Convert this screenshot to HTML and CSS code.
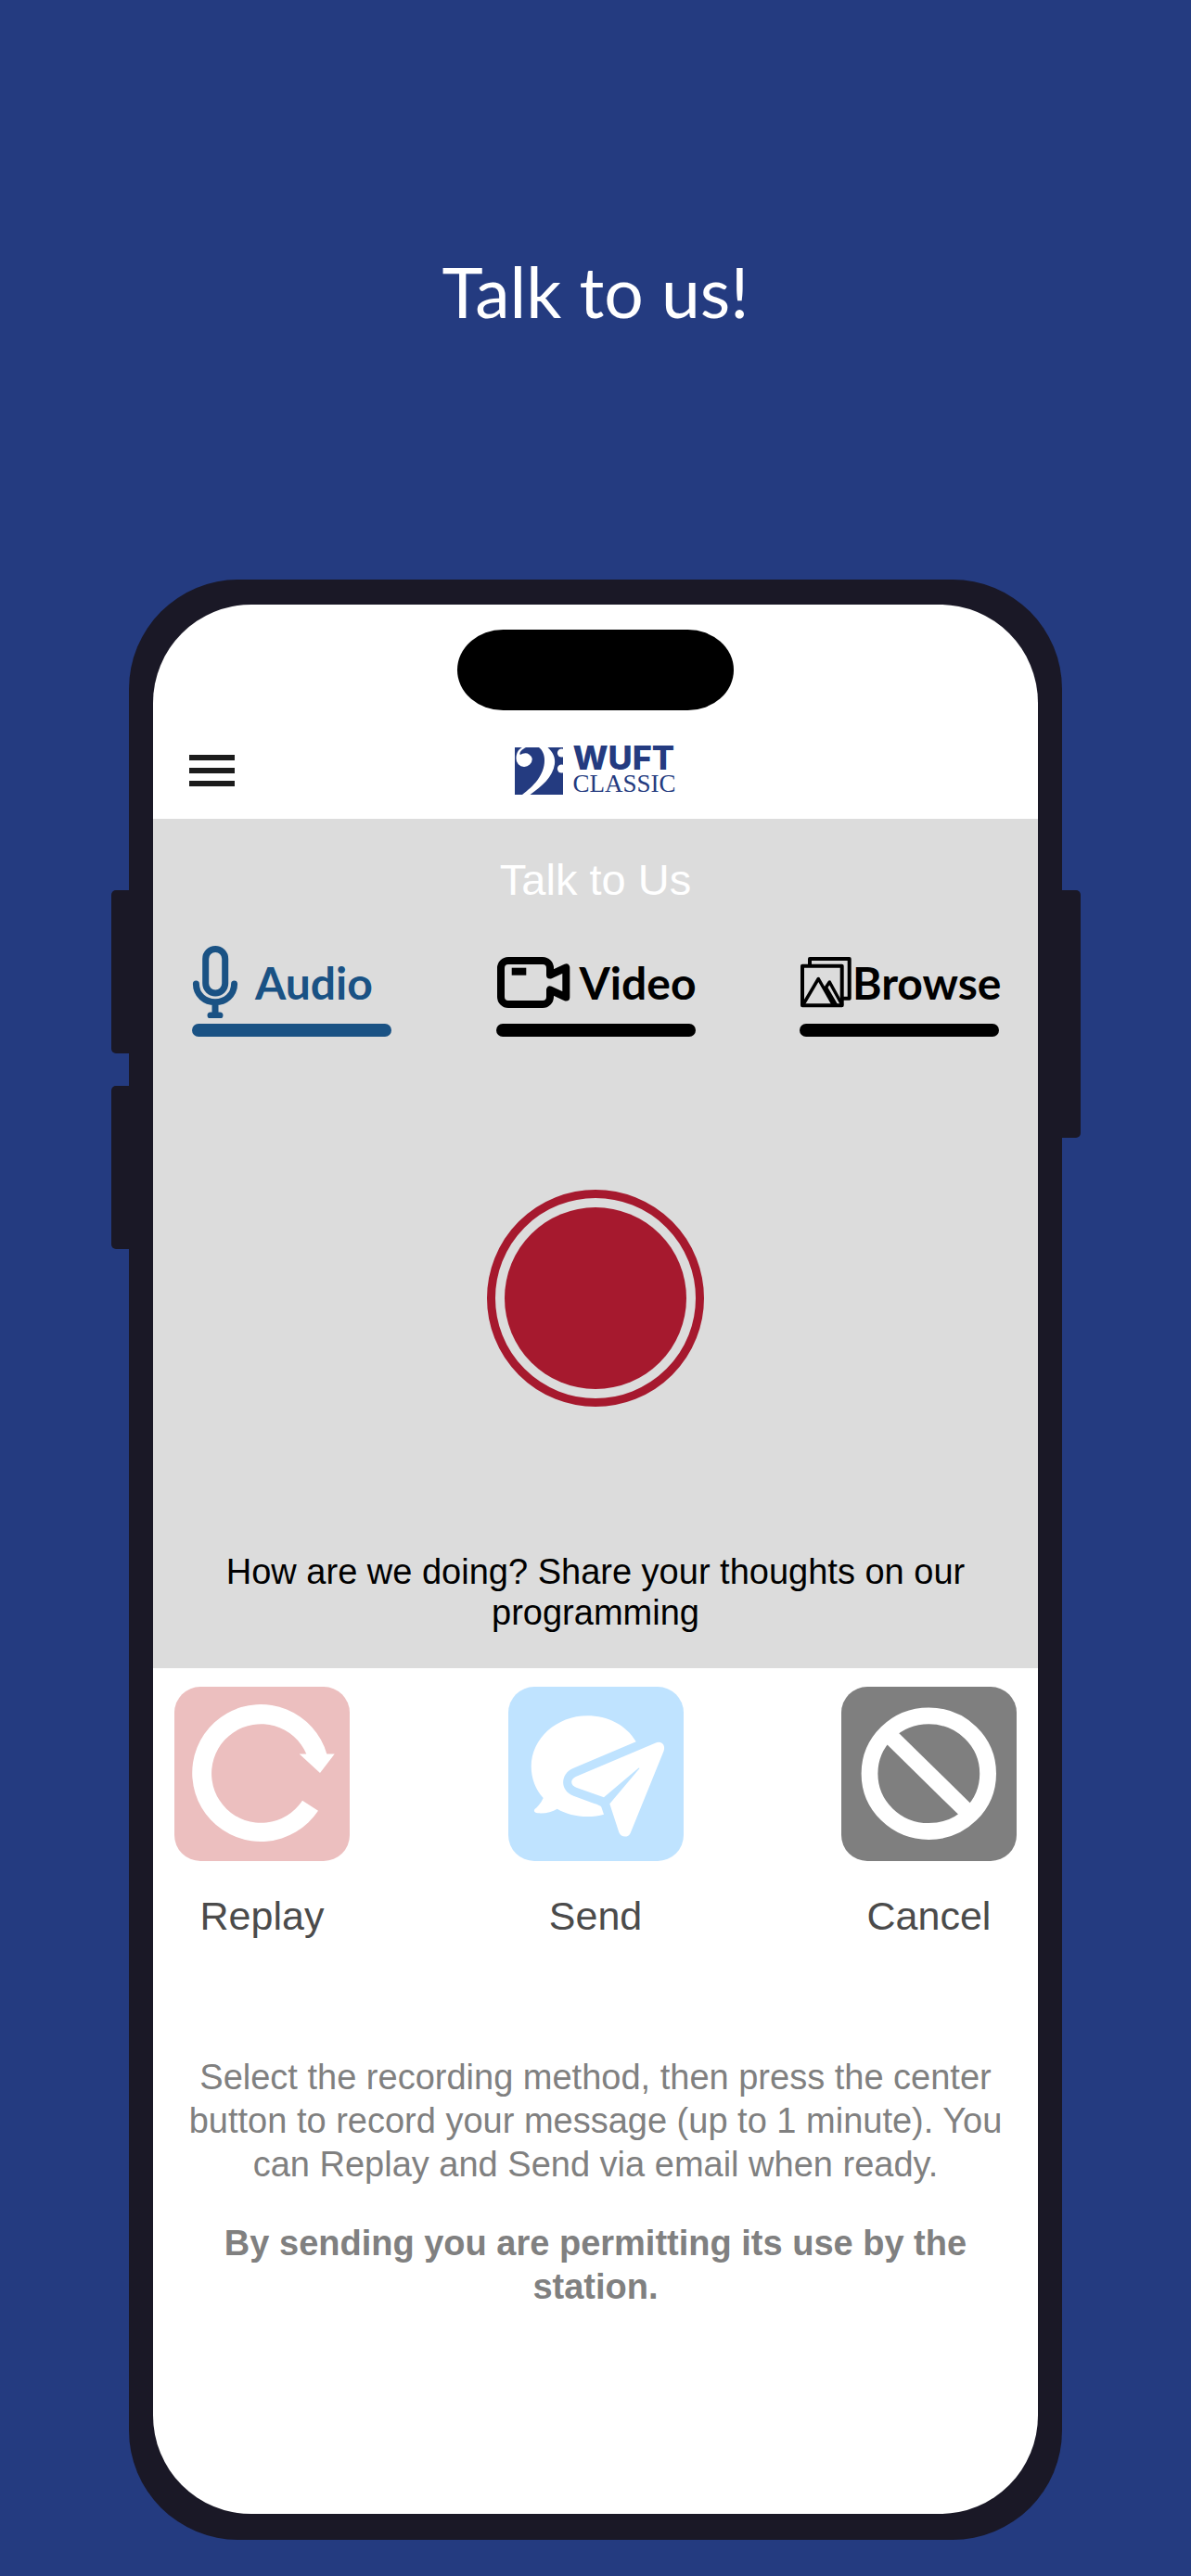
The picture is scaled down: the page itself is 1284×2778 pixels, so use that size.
FILE: index.html
```html
<!DOCTYPE html>
<html lang="en">
<head>
    <meta charset="UTF-8">
    <meta name="viewport" content="width=device-width, initial-scale=1.0">
    <title>WUFT Classic - Talk to Us</title>
    <link rel="stylesheet" href="styles.css">
</head>
<body>
    <h1 class="headline">Talk to us!</h1>

    <div class="phone">
        <span class="side-button volume-up"></span>
        <span class="side-button volume-down"></span>
        <span class="side-button power"></span>

        <div class="screen">
            <div class="status-bar">
                <div class="island"></div>
            </div>

            <header class="app-header">
                <button class="menu-btn" aria-label="Menu">
                    <span></span>
                    <span></span>
                    <span></span>
                </button>
                <a class="logo" href="#">
                    <svg class="logo-mark" viewBox="0 0 52 51" aria-hidden="true">
                        <path fill="#243b80" d="M0 0H52V51H0Z"/>
                        <path fill="#fff" d="M26 0H35.500C41 5 44 11 43 18C41 32 29 42 16.500 51H8C20 42 32 30 32 14C32 8 30 3 26 0Z"/>
                        <path fill="#fff" d="M1.500 12C1.500 6 4 2 8 0H12C8 2 5 5 5.500 7.500C6 8.500 7 7 10 6.500A7.500 7.500 0 0 1 18.800 12.500A8.600 8.600 0 0 1 1.500 12Z"/>
                        <circle cx="50.500" cy="6" r="4.600" fill="#fff"/>
                        <circle cx="50.500" cy="23" r="4.600" fill="#fff"/>
                    </svg>
                    <span class="logo-text">
                        <span class="logo-name">WUFT</span>
                        <span class="logo-sub">CLASSIC</span>
                    </span>
                </a>
            </header>

            <main>
                <section class="recorder">
                    <h2>Talk to Us</h2>

                    <div class="tabs">
                        <button class="tab tab-audio active">
                            <span class="tab-label">
                                <svg width="50" height="78" viewBox="0 0 50 78" fill="none" stroke="currentColor" stroke-width="7" stroke-linecap="round" aria-hidden="true">
                                    <rect x="14.700" y="3.500" width="21" height="47.500" rx="10.500"/>
                                    <path d="M4.400 41C4.400 53 14 60.700 25 60.700S45.600 53 45.600 41M25 61V75M20 75H30"/>
                                </svg>
                                Audio
                            </span>
                        </button>
                        <button class="tab tab-video">
                            <span class="tab-label">
                                <svg width="80" height="55" viewBox="0 0 80 55" fill="none" stroke="currentColor" stroke-width="8" stroke-linejoin="round" aria-hidden="true">
                                    <path d="M13 4H50A8 8 0 0 1 58 12V19.500L75.300 11.500V43.500L58 35.500V43A8 8 0 0 1 50 51H13A8 8 0 0 1 5 43V12A8 8 0 0 1 13 4Z"/>
                                    <path d="M16.700 15.700H32.300"/>
                                </svg>
                                Video
                            </span>
                        </button>
                        <button class="tab tab-browse">
                            <span class="tab-label">
                                <svg width="56" height="55" viewBox="0 0 56 55" fill="none" stroke="currentColor" stroke-width="4" stroke-linejoin="round" aria-hidden="true">
                                    <path d="M3 9.700H45.700V52.300H3Z"/>
                                    <path d="M11 9.700V2H53.700V44.700H45.700"/>
                                    <path stroke-width="3.500" d="M3.500 52L20.300 23.500L36.500 52M27 35L32.300 27L46 52M29 34L39.500 52"/>
                                </svg>
                                Browse
                            </span>
                        </button>
                    </div>

                    <button class="record-btn" aria-label="Record"></button>

                    <p class="question">How are we doing? Share your thoughts on our programming</p>
                </section>

                <div class="actions">
                    <button class="action">
                        <svg class="tile tile-replay" viewBox="0 0 189 188" aria-hidden="true">
                            <path fill="#fff" d="M164.300 72.400A74 74 0 1 0 155 133.700L138 122.700A53.300 53.300 0 1 1 142.300 72.400H134.700L157 93L172.700 72.400Z"/>
                        </svg>
                        Replay
                    </button>
                    <button class="action">
                        <svg class="tile tile-send" viewBox="0 0 189 188" aria-hidden="true">
                            <path fill="#fff" d="M137.700 59.300C127 41 107 31.300 85.300 31.300C52 31.300 24.700 56 24.700 86C24.700 99 29.500 111 37.700 120C35 126 31 130 28.500 132C27 134 28.500 136 31.500 136.300C40 137 47 135 52.700 131.700C62 137 73 140 85.300 140C92 140 98 139.200 103 137.700L100.300 129.700Q99.500 128 92 125.700L70.300 117.700C55.500 112 55.500 94 70.300 87.700Z"/>
                            <path fill="#fff" d="M159 60.500C165 58 170 63 167.500 69.500L131.700 157.700C129.500 163 121.500 163 119.300 157L109.300 126.300L141.500 88Q141 87 140.300 87.700L103 119.300L73.300 108.700C66.500 106 66.500 99.500 73.300 96.700Z"/>
                        </svg>
                        Send
                    </button>
                    <button class="action">
                        <svg class="tile tile-cancel" viewBox="0 0 189 188" aria-hidden="true">
                            <g fill="none" stroke="#fff" stroke-width="17.800">
                                <ellipse cx="94.300" cy="93.700" rx="63.800" ry="62.300"/>
                                <path d="M54 54.500L134 133"/>
                            </g>
                        </svg>
                        Cancel
                    </button>
                </div>

                <section class="notes">
                    <p>Select the recording method, then press the center button to record your message (up to 1 minute). You can Replay and Send via email when ready.</p>
                    <p class="consent">By sending you are permitting its use by the station.</p>
                </section>
            </main>
        </div>
    </div>
</body>
</html>
```
FILE: styles.css
```css
* {
    box-sizing: border-box;
}
body {
    margin: 0;
    padding: 269px 139px 39px;
    background-color: #243b80;
    font-family: "Liberation Sans", Arial, sans-serif;
    color: #000;
}
h1, h2, p {
    margin: 0;
    font-weight: normal;
    text-align: center;
}
button {
    padding: 0;
    border: none;
    background: none;
    font-family: inherit;
    color: inherit;
    cursor: pointer;
}
.headline {
    margin-bottom: 266px;
    font-family: Lato, sans-serif;
    font-size: 75px;
    line-height: 90px;
    color: #fff;
}

/* Phone frame */
.phone {
    position: relative;
    padding: 27px 26px 28px;
    border-radius: 118px;
    background-color: #1a1826;
}
.side-button {
    position: absolute;
    width: 20px;
    background-color: #1a1826;
}
.volume-up {
    top: 335px;
    left: -19px;
    height: 176px;
    border-radius: 5px 0 0 5px;
}
.volume-down {
    top: 546px;
    left: -19px;
    height: 176px;
    border-radius: 5px 0 0 5px;
}
.power {
    top: 335px;
    right: -20px;
    height: 267px;
    border-radius: 0 5px 5px 0;
}
.screen {
    overflow: hidden;
    border-radius: 106px;
    background-color: #fff;
}
.status-bar {
    padding-top: 27px;
}
.island {
    width: 298px;
    height: 87px;
    margin: 0 auto;
    border-radius: 50px / 44px;
    background-color: #000;
}

/* App header */
.app-header {
    display: grid;
    grid-template-columns: 1fr auto 1fr;
    align-items: center;
    padding: 37px 39px 24px;
}
.menu-btn {
    display: flex;
    flex-direction: column;
    gap: 8px;
    width: 49px;
}
.menu-btn span {
    height: 6px;
    width: 100%;
    background-color: #1c1c1c;
}
.logo {
    display: flex;
    align-items: center;
    gap: 10px;
    color: #243b80;
    text-decoration: none;
}
.logo-mark {
    width: 52px;
    height: 51px;
}
.logo-text {
    display: flex;
    flex-direction: column;
}
.logo-name {
    font-family: Inter, sans-serif;
    font-size: 36px;
    font-weight: 800;
    line-height: 28px;
}
.logo-sub {
    font-family: "Liberation Serif", serif;
    font-size: 27px;
    line-height: 28px;
}

/* Recorder */
.recorder {
    padding: 38px 42px;
    background-color: #dcdcdc;
}
.recorder h2 {
    margin-bottom: 43px;
    font-size: 47px;
    line-height: 56px;
    color: #fff;
}
.tabs {
    display: flex;
    justify-content: space-between;
}
.tab {
    width: 215px;
    font-family: Lato, sans-serif;
    font-size: 48px;
    font-weight: bold;
    color: #000;
}
.tab.active {
    color: #1a5284;
}
.tab-label {
    display: flex;
    align-items: center;
    height: 78px;
    margin-bottom: 6px;
    white-space: nowrap;
}
.tab svg {
    flex-shrink: 0;
}
.tab-audio .tab-label {
    gap: 18px;
}
.tab-video .tab-label {
    gap: 10px;
}
.tab-browse .tab-label {
    gap: 1px;
}
.tab::after {
    content: "";
    display: block;
    height: 14px;
    border-radius: 7px;
    background-color: currentColor;
}
.record-btn {
    display: block;
    width: 234px;
    height: 234px;
    margin: 165px auto 156px;
    padding: 10px;
    border: 9px solid #a6192e;
    border-radius: 50%;
}
.record-btn::before {
    content: "";
    display: block;
    height: 100%;
    border-radius: 50%;
    background-color: #a6192e;
}
.question {
    font-size: 38px;
    line-height: 44px;
}

/* Replay / Send / Cancel */
.actions {
    display: flex;
    justify-content: space-between;
    padding: 20px 23px 0;
}
.action {
    display: flex;
    flex-direction: column;
    align-items: center;
    gap: 35px;
    font-size: 43px;
    line-height: 48px;
    color: #4b4b4b;
}
.tile {
    width: 189px;
    height: 188px;
    border-radius: 28px;
}
.tile-replay {
    background-color: #ecbfbf;
}
.tile-send {
    background-color: #bfe3ff;
}
.tile-cancel {
    background-color: #7f7f7f;
}

.notes {
    padding: 127px 30px 221px;
    font-size: 38px;
    line-height: 47px;
    color: #808080;
}
.consent {
    margin-top: 38px;
    font-weight: bold;
}
```
